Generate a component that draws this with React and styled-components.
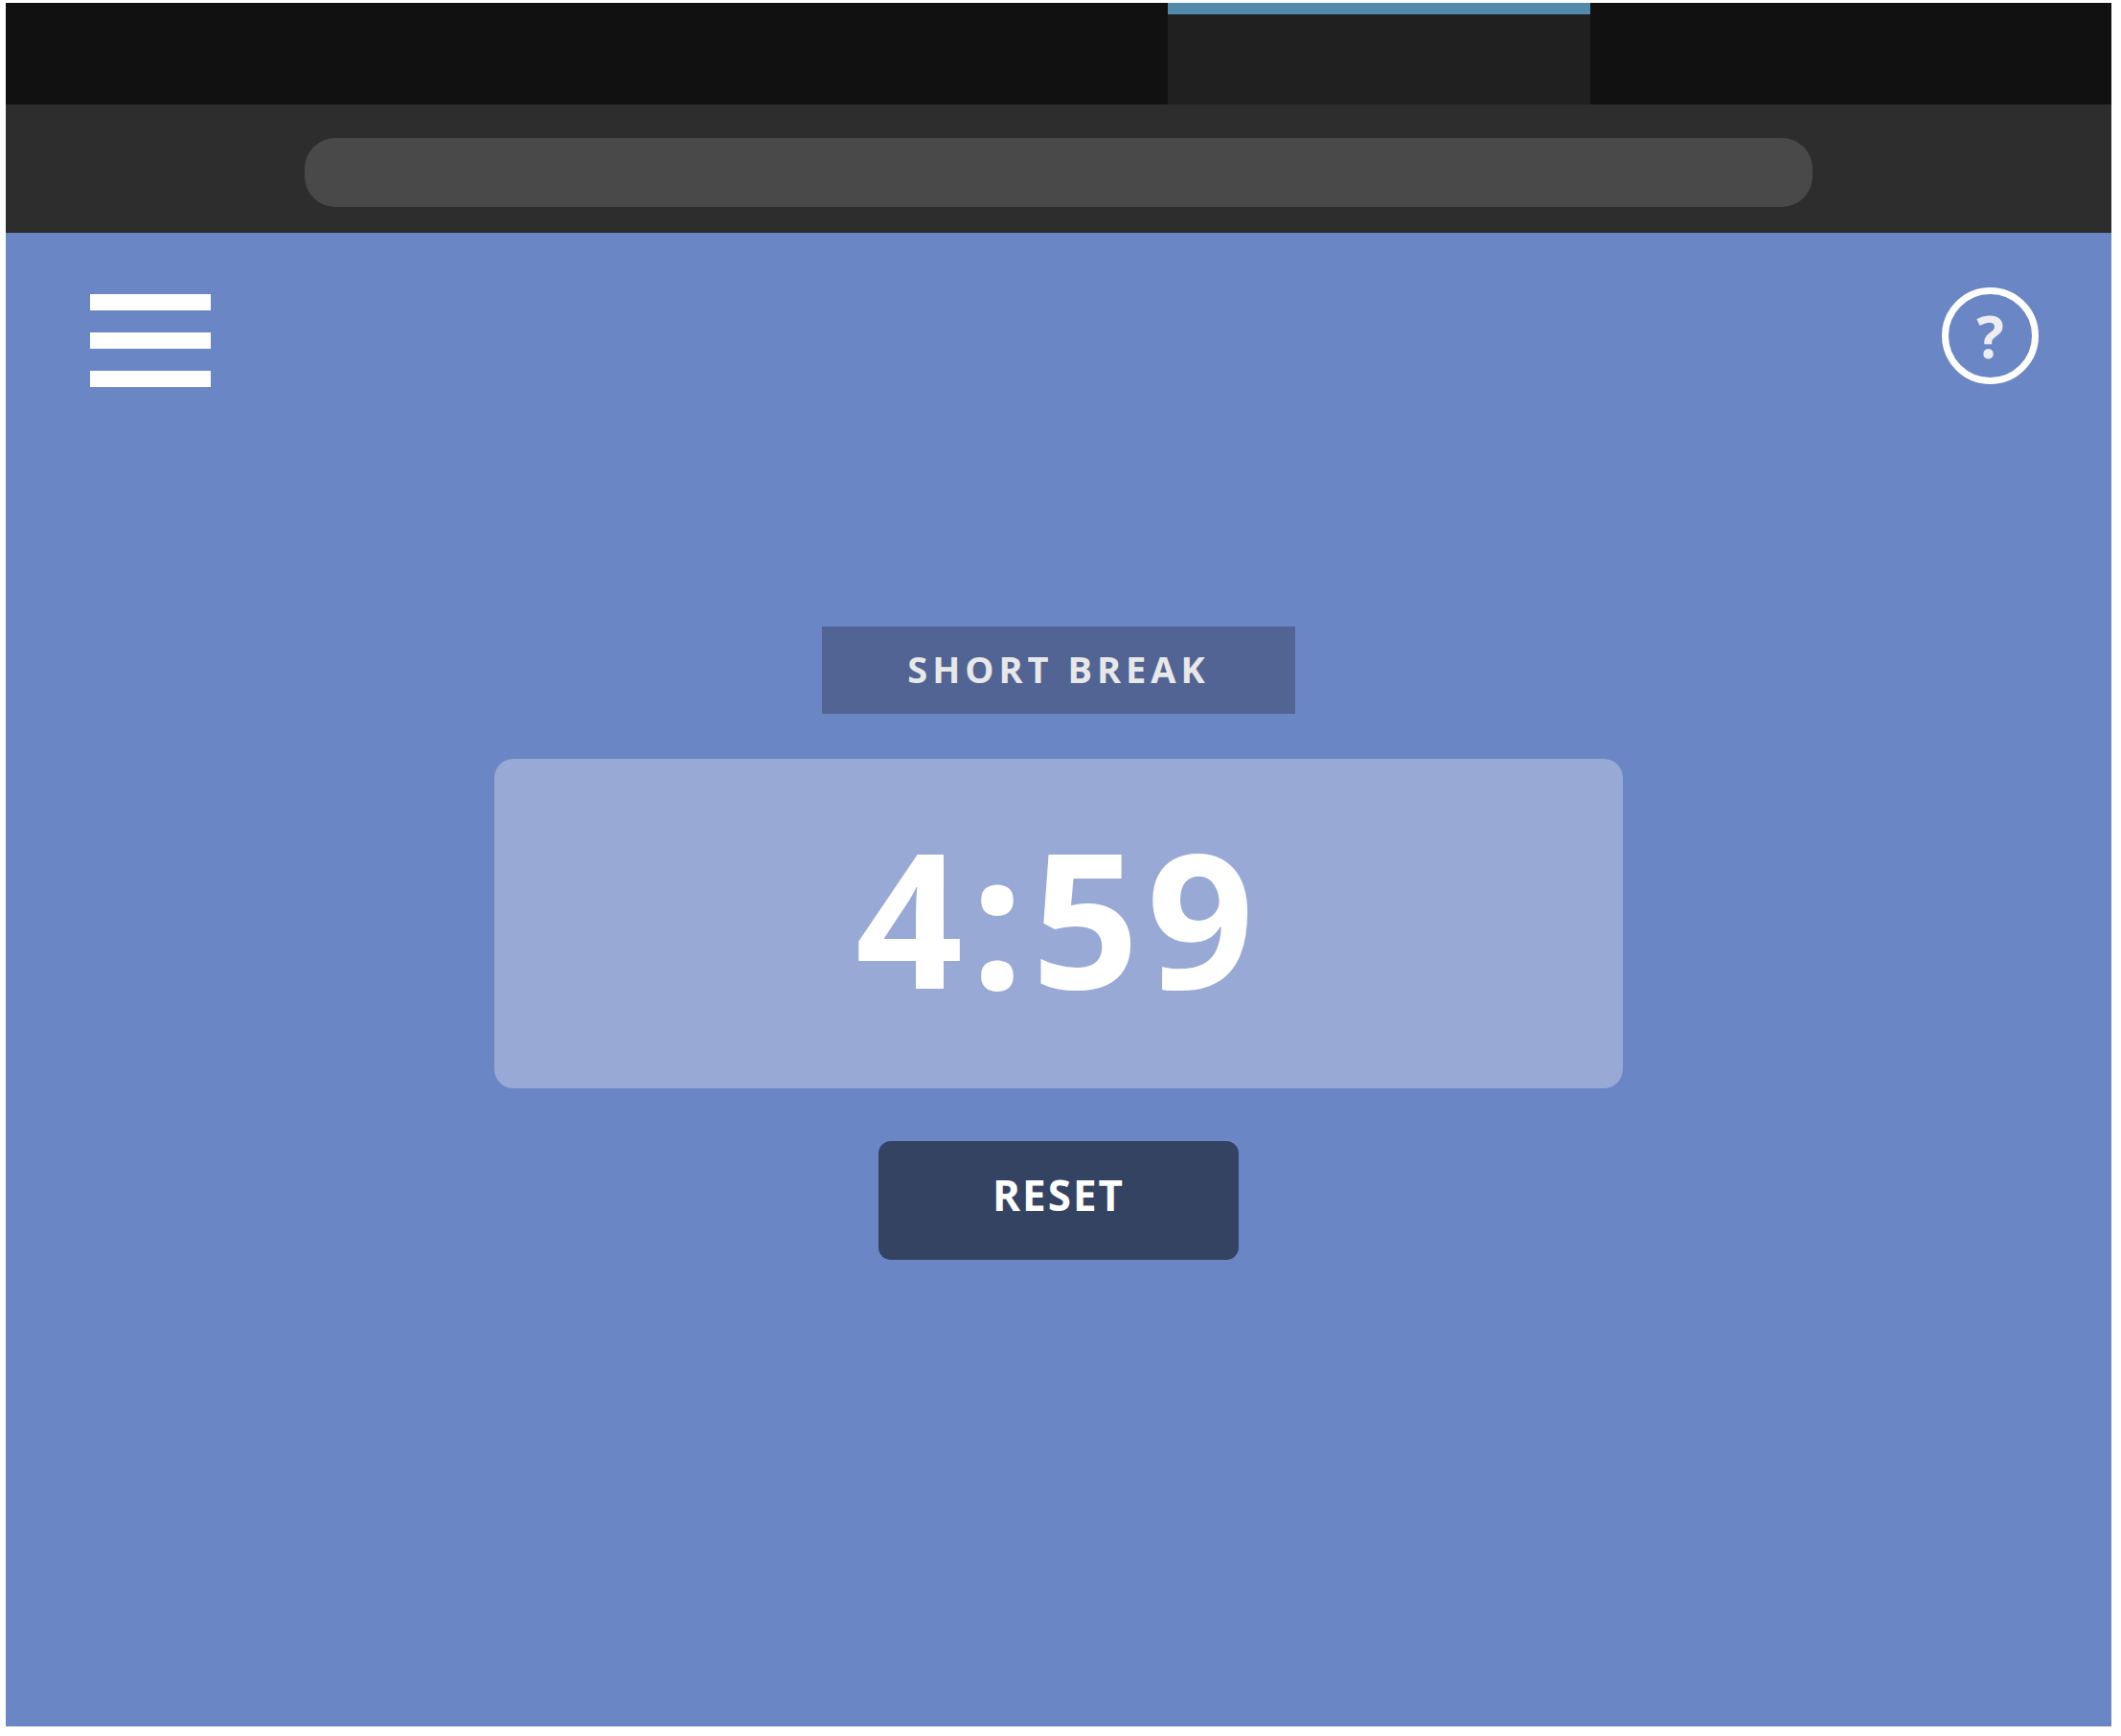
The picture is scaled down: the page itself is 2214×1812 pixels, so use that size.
import React, { useState } from "react";
import styled, { createGlobalStyle } from "styled-components";

const GlobalStyle = createGlobalStyle`
  *, *::before, *::after { box-sizing: border-box; }
  body {
    margin: 0;
    background: #ffffff;
    font-family: "Open Sans", "Noto Sans", sans-serif;
  }
  button, input { font-family: inherit; }
`;

const Page = styled.div`
  display: flex;
  min-height: 100vh;
  padding: 3px 10px 10px 6px;
`;

const Browser = styled.div`
  display: flex;
  flex: 1;
  flex-direction: column;
  background: #6a86c5;
`;

const TabStrip = styled.div`
  display: flex;
  justify-content: flex-end;
  height: 106px;
  padding-right: 544px;
  background: #111111;
`;

const Tab = styled.div`
  width: 441px;
  background: #202020;
  border-top: 12px solid #5389ab;
`;

const Toolbar = styled.div`
  display: flex;
  height: 134px;
  padding: 35px 312px 27px;
  background: #2d2d2d;
`;

const AddressInput = styled.input`
  flex: 1;
  min-width: 0;
  padding: 0 32px;
  border: 0;
  border-radius: 32px;
  background: #494949;
  color: #ffffff;
  font-size: 32px;
`;

const Header = styled.header`
  display: flex;
  justify-content: space-between;
  align-items: flex-start;
  padding: 57px 76px 0 88px;
`;

const MenuButton = styled.button`
  display: flex;
  flex-direction: column;
  gap: 23px;
  width: 126px;
  margin-top: 7px;
  padding: 0;
  border: 0;
  background: none;
  cursor: pointer;
`;

const MenuBar = styled.span`
  width: 100%;
  height: 17px;
  background: #ffffff;
`;

const HelpButton = styled.button`
  display: flex;
  justify-content: center;
  align-items: center;
  width: 101px;
  height: 101px;
  padding: 0;
  border: 7px solid #ffffff;
  border-radius: 50%;
  background: none;
  color: #eeedf1;
  font-size: 60px;
  font-weight: 700;
  line-height: 60px;
  cursor: pointer;
`;

const Timer = styled.main`
  display: flex;
  flex-direction: column;
  align-items: center;
  padding: 250px 40px 40px;
`;

const Mode = styled.h1`
  margin: 0 0 47px;
  padding: 0 89px 2px;
  background: #516493;
  color: #e8e8e8;
  font-size: 38px;
  font-weight: 700;
  line-height: 89px;
  letter-spacing: 5px;
`;

const Clock = styled.div`
  width: 100%;
  max-width: 1178px;
  margin-bottom: 55px;
  padding-bottom: 16px;
  border-radius: 20px;
  background: #98a9d5;
  color: #ffffff;
  font-size: 196px;
  font-weight: 700;
  line-height: 328px;
  letter-spacing: 8px;
  text-align: center;
`;

const ResetButton = styled.button`
  width: 376px;
  padding: 0 0 12px;
  border: 0;
  border-radius: 13px;
  background: #354362;
  color: #ffffff;
  font-size: 44px;
  font-weight: 700;
  line-height: 112px;
  letter-spacing: 2px;
  cursor: pointer;
`;

export default function App() {
  const [seconds, setSeconds] = useState(299);
  const minutes = Math.floor(seconds / 60);
  const rest = String(seconds % 60).padStart(2, "0");

  return (
    <>
      <GlobalStyle />
      <Page>
        <Browser>
          <TabStrip>
            <Tab />
          </TabStrip>
          <Toolbar>
            <AddressInput type="text" aria-label="Address" />
          </Toolbar>
          <Header>
            <MenuButton type="button" aria-label="Menu">
              <MenuBar />
              <MenuBar />
              <MenuBar />
            </MenuButton>
            <HelpButton type="button" aria-label="Help">?</HelpButton>
          </Header>
          <Timer>
            <Mode>SHORT BREAK</Mode>
            <Clock role="timer">{minutes}:{rest}</Clock>
            <ResetButton type="button" onClick={() => setSeconds(299)}>RESET</ResetButton>
          </Timer>
        </Browser>
      </Page>
    </>
  );
}
